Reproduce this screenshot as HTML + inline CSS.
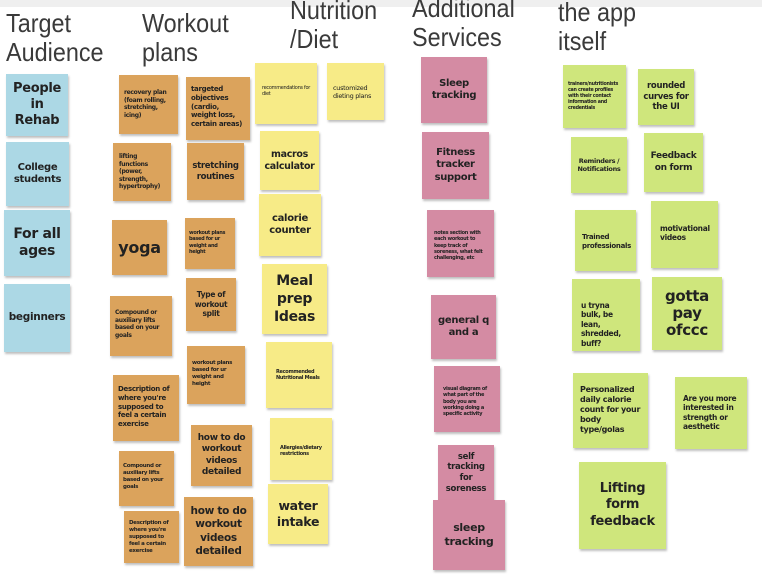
<!DOCTYPE html>
<html><head><meta charset="utf-8"><style>
body{margin:0;width:762px;height:574px;background:#fff;position:relative;overflow:hidden;font-family:"DejaVu Sans","Liberation Sans",sans-serif}
.top{position:absolute;left:0;top:0;width:762px;height:7px;background:#efefef}
.h{position:absolute;font-family:"Liberation Sans",sans-serif;font-size:26px;line-height:29px;color:#3a3a3a;transform:scaleX(.9);transform-origin:left top;white-space:nowrap}
.n{position:absolute;box-sizing:border-box;box-shadow:1px 2px 2px rgba(0,0,0,.25);color:#222;font-weight:bold;padding:8px 6px;font-size:6px;line-height:1.25;letter-spacing:-.3px;overflow:hidden}
.c{display:flex;align-items:center;justify-content:center;text-align:center;padding:3px}
.b{background:#acd8e5}.o{background:#dba35c}.y{background:#f7eb87}.p{background:#d48ba3}.g{background:#cfe67c}
</style></head><body>
<div class="top"></div>
<div class="h" style="left:6px;top:9px">Target<br>Audience</div>
<div class="h" style="left:142px;top:9px">Workout<br>plans</div>
<div class="h" style="left:290px;top:-4px">Nutrition<br>/Diet</div>
<div class="h" style="left:412px;top:-6px">Additional<br>Services</div>
<div class="h" style="left:558px;top:-2px">the app<br>itself</div>

<div class="n b c" style="left:6px;top:74px;width:62px;height:62px;font-size:13px">People in Rehab</div>
<div class="n b c" style="left:6px;top:142px;width:63px;height:64px;font-size:10px">College students</div>
<div class="n b c" style="left:4px;top:210px;width:66px;height:66px;font-size:14px">For all ages</div>
<div class="n b c" style="left:4px;top:284px;width:66px;height:68px;font-size:10.5px">beginners</div>

<div class="n o" style="left:119px;top:75px;width:59px;height:59px;padding:14px 5px">recovery plan (foam rolling, stretching, icing)</div>
<div class="n o" style="left:186px;top:77px;width:64px;height:63px;font-size:7px;padding:8px 5px">targeted objectives (cardio, weight loss, certain areas)</div>
<div class="n o" style="left:113px;top:143px;width:58px;height:58px;padding:10px 6px">lifting functions (power, strength, hypertrophy)</div>
<div class="n o c" style="left:187px;top:143px;width:57px;height:57px;font-size:8.5px">stretching routines</div>
<div class="n o c" style="left:112px;top:220px;width:55px;height:55px;font-size:16px">yoga</div>
<div class="n o" style="left:185px;top:218px;width:50px;height:51px;font-size:5px;padding:12px 4px">workout plans based for ur weight and height</div>
<div class="n o" style="left:110px;top:296px;width:62px;height:60px;padding:13px 5px 0">Compound or auxiliary lifts based on your goals</div>
<div class="n o c" style="left:186px;top:278px;width:50px;height:53px;font-size:7.5px">Type of workout split</div>
<div class="n o" style="left:187px;top:346px;width:58px;height:58px;font-size:5.5px;padding:14px 5px">workout plans based for ur weight and height</div>
<div class="n o" style="left:113px;top:375px;width:66px;height:66px;font-size:7px;padding:10px 5px">Description of where you're supposed to feel a certain exercise</div>
<div class="n o c" style="left:191px;top:425px;width:61px;height:61px;font-size:9px">how to do workout videos detailed</div>
<div class="n o" style="left:119px;top:451px;width:55px;height:55px;font-size:5.5px;padding:12px 4px">Compound or auxiliary lifts based on your goals</div>
<div class="n o" style="left:124px;top:511px;width:55px;height:52px;font-size:5.5px;padding:9px 5px">Description of where you're supposed to feel a certain exercise</div>
<div class="n o c" style="left:184px;top:497px;width:69px;height:69px;font-size:10.5px">how to do workout videos detailed</div>

<div class="n y" style="left:255px;top:63px;width:62px;height:61px;font-size:5px;font-weight:normal;padding:22px 7px">recommendations for diet</div>
<div class="n y" style="left:327px;top:63px;width:57px;height:57px;font-size:6.5px;font-weight:normal;padding:21px 6px">customized dieting plans</div>
<div class="n y c" style="left:260px;top:131px;width:59px;height:59px;font-size:9.5px">macros calculator</div>
<div class="n y c" style="left:259px;top:194px;width:62px;height:62px;font-size:10px">calorie counter</div>
<div class="n y c" style="left:262px;top:264px;width:65px;height:70px;font-size:14px;line-height:1.3">Meal prep Ideas</div>
<div class="n y" style="left:266px;top:342px;width:66px;height:66px;font-size:5px;padding:27px 10px">Recommended Nutritional Meals</div>
<div class="n y" style="left:270px;top:418px;width:62px;height:62px;font-size:5px;padding:27px 10px">Allergies/dietary restrictions</div>
<div class="n y c" style="left:268px;top:484px;width:60px;height:60px;font-size:12.5px">water intake</div>

<div class="n p c" style="left:421px;top:57px;width:66px;height:66px;font-size:10px">Sleep tracking</div>
<div class="n p c" style="left:422px;top:132px;width:67px;height:67px;font-size:10px">Fitness tracker support</div>
<div class="n p" style="left:427px;top:210px;width:67px;height:67px;font-size:5px;padding:20px 7px">notes section with each workout to keep track of soreness, what felt challenging, etc</div>
<div class="n p c" style="left:431px;top:295px;width:65px;height:64px;font-size:10px">general q and a</div>
<div class="n p" style="left:434px;top:366px;width:66px;height:66px;font-size:5px;padding:20px 9px">visual diagram of what part of the body you are working doing a specific activity</div>
<div class="n p c" style="left:438px;top:445px;width:56px;height:56px;font-size:8.5px">self tracking for soreness</div>
<div class="n p c" style="left:433px;top:500px;width:72px;height:70px;font-size:11px">sleep tracking</div>

<div class="n g" style="left:563px;top:65px;width:63px;height:63px;font-size:4.8px;padding:17px 5px">trainers/nutritionists can create profiles with their contact information and credentials</div>
<div class="n g c" style="left:638px;top:69px;width:56px;height:56px;font-size:8.5px">rounded curves for the UI</div>
<div class="n g c" style="left:571px;top:137px;width:56px;height:56px;font-size:6.5px">Reminders / Notifications</div>
<div class="n g c" style="left:644px;top:133px;width:59px;height:59px;font-size:9px">Feedback on form</div>
<div class="n g" style="left:575px;top:210px;width:61px;height:61px;font-size:7px;padding:23px 7px">Trained professionals</div>
<div class="n g" style="left:651px;top:201px;width:67px;height:67px;font-size:7.5px;padding:23px 9px">motivational videos</div>
<div class="n g" style="left:572px;top:279px;width:68px;height:72px;font-size:7.5px;padding:22px 9px">u tryna bulk, be lean, shredded, buff?</div>
<div class="n g c" style="left:652px;top:277px;width:70px;height:73px;font-size:15px;line-height:1.15">gotta pay ofccc</div>
<div class="n g" style="left:573px;top:373px;width:75px;height:75px;font-size:8px;padding:12px 7px">Personalized daily calorie count for your body type/golas</div>
<div class="n g" style="left:675px;top:377px;width:72px;height:72px;font-size:7.5px;padding:17px 8px">Are you more interested in strength or aesthetic</div>
<div class="n g c" style="left:579px;top:462px;width:87px;height:87px;font-size:13px;line-height:1.25">Lifting form feedback</div>
</body></html>
